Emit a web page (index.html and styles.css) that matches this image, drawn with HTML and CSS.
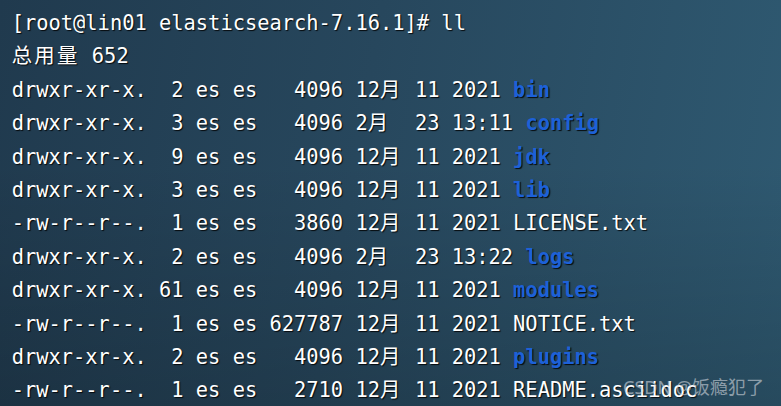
FILE: index.html
```html
<!DOCTYPE html>
<html lang="zh-CN">
<head>
    <meta charset="UTF-8">
    <title>ll - elasticsearch-7.16.1</title>
    <link rel="stylesheet" href="styles.css">
</head>
<body>

    <!-- Terminal output -->
    <div class="terminal">
        <div class="line">[root@lin01 elasticsearch-7.16.1]# ll</div>
        <div class="line"><span class="w">总</span><span class="w">用</span><span class="w">量</span> 652</div>
        <div class="line">drwxr-xr-x.  2 es es   4096 12<span class="w">月</span> 11 2021 <span class="dir">bin</span></div>
        <div class="line">drwxr-xr-x.  3 es es   4096 2<span class="w">月</span>  23 13:11 <span class="dir">config</span></div>
        <div class="line">drwxr-xr-x.  9 es es   4096 12<span class="w">月</span> 11 2021 <span class="dir">jdk</span></div>
        <div class="line">drwxr-xr-x.  3 es es   4096 12<span class="w">月</span> 11 2021 <span class="dir">lib</span></div>
        <div class="line">-rw-r--r--.  1 es es   3860 12<span class="w">月</span> 11 2021 LICENSE.txt</div>
        <div class="line">drwxr-xr-x.  2 es es   4096 2<span class="w">月</span>  23 13:22 <span class="dir">logs</span></div>
        <div class="line">drwxr-xr-x. 61 es es   4096 12<span class="w">月</span> 11 2021 <span class="dir">modules</span></div>
        <div class="line">-rw-r--r--.  1 es es 627787 12<span class="w">月</span> 11 2021 NOTICE.txt</div>
        <div class="line">drwxr-xr-x.  2 es es   4096 12<span class="w">月</span> 11 2021 <span class="dir">plugins</span></div>
        <div class="line">-rw-r--r--.  1 es es   2710 12<span class="w">月</span> 11 2021 README.asciidoc</div>
    </div>

    <!-- Watermark -->
    <div class="watermark">CSDN @饭瘾犯了</div>

</body>
</html>
```

FILE: styles.css
```css
/* Global Styles */
html, body {
    margin: 0;
    height: 100%;
}

body {
    position: relative;
    overflow: hidden;
    background:
        linear-gradient(to bottom, rgba(0, 0, 0, 0) 40%, rgba(0, 0, 0, 0.18) 100%),
        linear-gradient(100deg, #203a4e 0%, #27475d 45%, #2f5a72 100%);
}

/* Terminal */
.terminal {
    padding: 7px 0 0 11.7px;
    font-family: "DejaVu Sans Mono", "Noto Sans CJK SC", monospace;
    font-size: 20.4px;
    line-height: 33.4px;
    color: #ffffff;
    text-shadow: 1px 1px 1px rgba(0, 0, 0, 0.85);
}

.line {
    height: 33.4px;
    white-space: pre;
}

/* wide (CJK) cells take two columns */
.w {
    display: inline-block;
    width: 2ch;
    line-height: 1;
    font-family: "Noto Sans CJK SC", sans-serif;
}

.dir {
    color: #1d61d8;
    font-weight: bold;
}

/* Watermark */
.watermark {
    position: absolute;
    right: 17px;
    bottom: 7px;
    font-family: "Noto Sans", "Noto Sans CJK SC", sans-serif;
    font-size: 18px;
    color: rgba(210, 215, 222, 0.6);
}
```
